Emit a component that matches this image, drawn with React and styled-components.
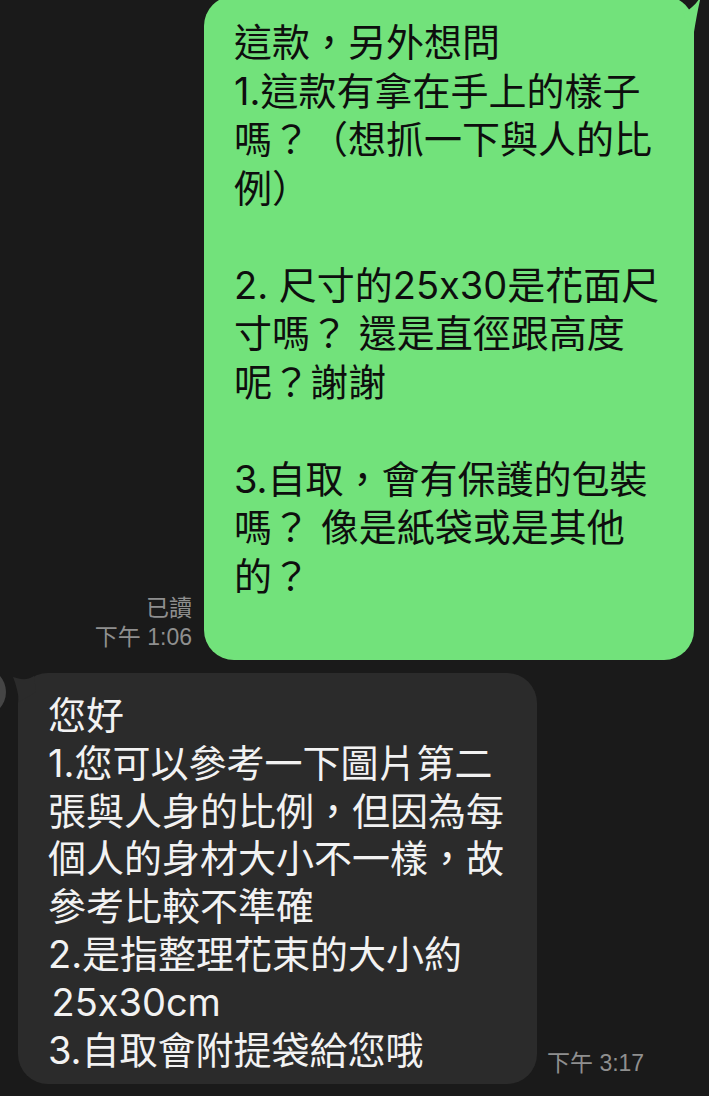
import React from 'react';
import styled, { createGlobalStyle } from 'styled-components';

const GlobalStyle = createGlobalStyle`
    html, body {
        margin: 0;
        padding: 0;
        background: #1a1a1a;
        overflow: hidden;
    }
    body {
        font-family: Inter, "Noto Sans CJK TC", sans-serif;
        font-feature-settings: "calt" 0;
    }
`;

const sent = [
    '這款，另外想問',
    '1.這款有拿在手上的樣子',
    '嗎？（想抓一下與人的比',
    '例）',
    '',
    '2. 尺寸的25x30是花面尺',
    '寸嗎？ 還是直徑跟高度',
    '呢？謝謝',
    '',
    '3.自取，會有保護的包裝',
    '嗎？ 像是紙袋或是其他',
    '的？'
];

const received = [
    '您好',
    '1.您可以參考一下圖片第二',
    '張與人身的比例，但因為每',
    '個人的身材大小不一樣，故',
    '參考比較不準確',
    '2.是指整理花束的大小約',
    '\u200a25x30cm',
    '3.自取會附提袋給您哦'
];

const Chat = styled.div`
    width: 709px;
    height: 1096px;
    display: flex;
    flex-direction: column;
    overflow: hidden;
`;

const Row = styled.div`
    display: flex;
    align-items: flex-end;
    justify-content: ${p => (p.$mine ? 'flex-end' : 'flex-start')};
    padding-right: ${p => (p.$mine ? '15px' : '0')};
    margin-top: ${p => (p.$mine ? '-4px' : '13px')};
`;

const Meta = styled.div`
    display: flex;
    flex-direction: column;
    align-items: ${p => (p.$mine ? 'flex-end' : 'flex-start')};
    font-family: "Liberation Sans", "Noto Sans CJK TC", sans-serif;
    font-size: 23px;
    line-height: 29px;
    color: #8f8f8f;
    margin: ${p => (p.$mine ? '0 12px 8px 0' : '0 0 6px 10px')};
    white-space: nowrap;
`;

const Bubble = styled.div`
    position: relative;
    box-sizing: border-box;
    width: ${p => (p.$mine ? '490px' : '519px')};
    border-radius: 30px;
    background: ${p => (p.$mine ? '#72e27b' : '#2b2b2b')};
    color: ${p => (p.$mine ? '#0e0e0e' : '#f2f2f2')};
    padding: ${p => (p.$mine ? '22px 12px 60px 30px' : '19px 12px 10px 30px')};
    margin-left: ${p => (p.$mine ? '0' : '12px')};
    font-size: 38px;
    font-feature-settings: "calt" 0;
`;

const Line = styled.div`
    white-space: pre;
    line-height: ${p => (p.$mine ? '48.5px' : '47.8px')};
    height: ${p => (p.$mine ? '48.5px' : '47.8px')};
`;

const Tail = styled.svg`
    position: absolute;
    top: ${p => (p.$mine ? '0' : '-1px')};
    ${p => (p.$mine ? 'right: -7px;' : 'left: -6px;')}
    width: 36px;
    height: 40px;
`;

const Avatar = styled.div`
    flex: none;
    align-self: flex-start;
    width: 48px;
    height: 48px;
    margin-left: -42px;
    margin-top: -5px;
    border-radius: 50%;
    background: #454545;
`;

const App = () => (
    <>
        <GlobalStyle />
        <Chat>
            <Row $mine>
                <Meta $mine>
                    <span>已讀</span>
                    <span>下午 1:06</span>
                </Meta>
                <Bubble $mine>
                    <Tail $mine viewBox="0 0 36 40">
                        <path d="M29 36 C31 24, 33 12, 36 0 C32 7, 27 12, 18 18 Z" fill="#72e27b" />
                    </Tail>
                    {sent.map((l, i) => <Line $mine key={i}>{l}</Line>)}
                </Bubble>
            </Row>
            <Row>
                <Avatar />
                <Bubble>
                    <Tail viewBox="0 0 36 40">
                        <path d="M7 30 C6 20, 4 12, 1 5 C8 7, 14 9, 22 4 L24 20 Z" fill="#2b2b2b" />
                    </Tail>
                    {received.map((l, i) => <Line key={i}>{l}</Line>)}
                </Bubble>
                <Meta>
                    <span>下午 3:17</span>
                </Meta>
            </Row>
        </Chat>
    </>
);

export default App;
